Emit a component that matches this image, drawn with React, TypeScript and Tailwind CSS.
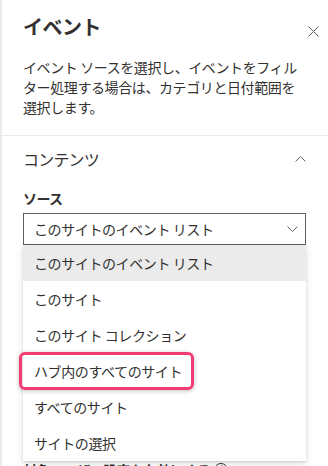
import { useState } from "react";

const options = [
  "このサイトのイベント リスト",
  "このサイト",
  "このサイト コレクション",
  "ハブ内のすべてのサイト",
  "すべてのサイト",
  "サイトの選択",
];

function Chevron({ up }: { up?: boolean }) {
  return (
    <svg width="11" height="6" viewBox="0 0 11 6" fill="none">
      <path
        d={up ? "M0.5 5.5 L5.5 0.5 L10.5 5.5" : "M0.5 0.5 L5.5 5.5 L10.5 0.5"}
        stroke="#605e5c"
        strokeWidth="1"
      />
    </svg>
  );
}

export default function App() {
  const [selected] = useState(0);

  return (
    <div
      className="relative w-[328px] h-[466px] overflow-hidden bg-white border-l-2 border-[#edebe9] text-[#323130]"
      style={{ fontFamily: '"Noto Sans CJK JP", "Noto Sans", sans-serif' }}
    >
      {/* header */}
      <div className="flex items-start justify-between pl-[21px] pr-[9px] pt-[13px]">
        <h1 className="text-[20px] leading-[28px] font-bold tracking-[-0.5px]">イベント</h1>
        <button className="mt-[13px] w-[11px] h-[11px]">
          <svg width="11" height="11" viewBox="0 0 11 11">
            <path d="M0.5 0.5 L10.5 10.5 M10.5 0.5 L0.5 10.5" stroke="#605e5c" strokeWidth="1" />
          </svg>
        </button>
      </div>
      <p className="pl-[21px] pr-[14px] mt-[16px] text-[14px] leading-[20px] tracking-[-0.4px]">
        イベント ソースを選択し、イベントをフィル
        <br />
        ター処理する場合は、カテゴリと日付範囲を
        <br />
        選択します。
      </p>

      <div className="mt-[18px] h-px bg-[#edebe9]" />

      {/* section */}
      <div className="pl-[21px] pr-[22px]">
        <div className="flex items-center justify-between mt-[12px] h-[22px]">
          <span className="text-[16px] leading-[22px] tracking-[-0.8px]">コンテンツ</span>
          <Chevron up />
        </div>

        <div className="mt-[18px] text-[14px] leading-[20px] font-bold tracking-[-0.6px]">ソース</div>

        <div className="relative mt-[5px]">
          <div className="flex items-center justify-between h-8 border border-[#605e5c] pl-[10px] pr-[7px]">
            <span className="text-[14px] leading-[20px] tracking-[-0.4px]">{options[selected]}</span>
            <Chevron />
          </div>

          <ul className="absolute top-full left-0 w-full bg-white z-10 shadow-[0_3px_7px_rgba(0,0,0,0.13),0_0.6px_1.8px_rgba(0,0,0,0.11)]">
            {options.map((o, i) => (
              <li
                key={o}
                className={`relative flex items-center h-9 pl-[11px] text-[14px] leading-[20px] tracking-[-0.4px] ${
                  i === selected ? "bg-[#ebebeb]" : ""
                }`}
              >
                {o}
                {i === 3 && (
                  <span className="absolute left-[-4px] top-[-1px] w-[175px] h-[38px] rounded-[6px] border-[3px] border-[#ef3d74] shadow-[0_1px_4px_rgba(0,0,0,0.25)]" />
                )}
              </li>
            ))}
          </ul>
        </div>

        <div className="mt-[215px] flex items-center gap-1 text-[14px] leading-[20px] font-bold tracking-[-0.6px]">
          対象ユーザー設定を有効にする
          <span className="inline-flex items-center justify-center w-[14px] h-[14px] rounded-full border border-[#323130] text-[10px]">i</span>
        </div>
      </div>
    </div>
  );
}
